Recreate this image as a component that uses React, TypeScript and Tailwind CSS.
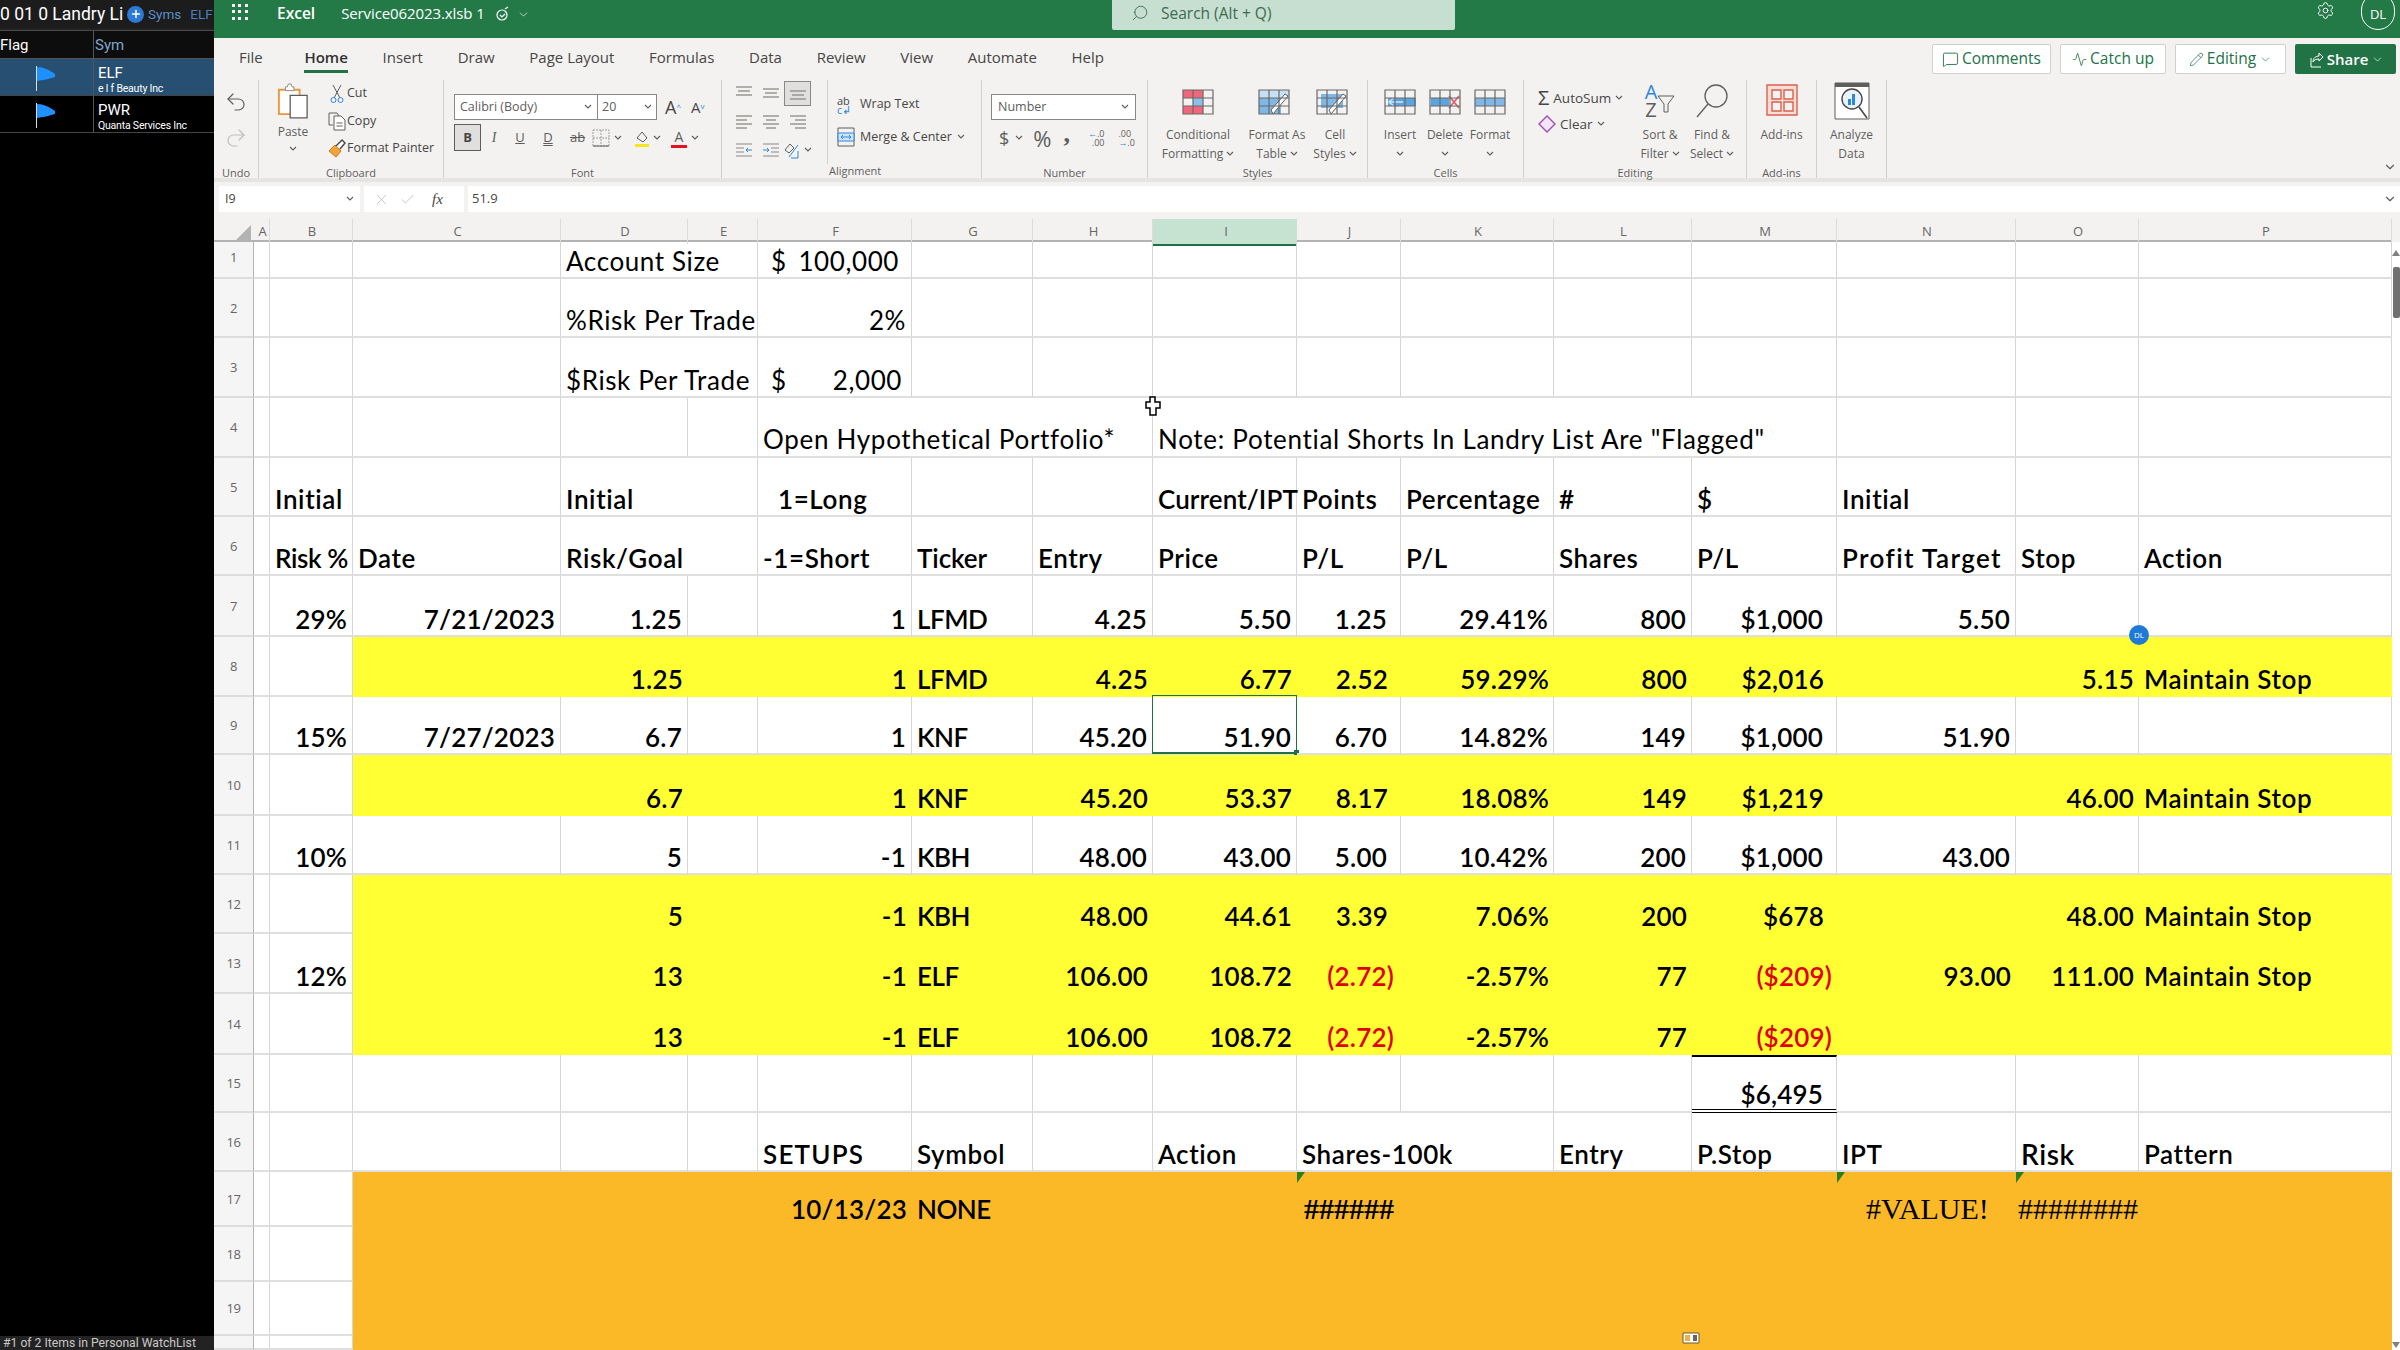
import React from "react";
import { Undo2, Redo2, X, Check, Settings, MessageSquare, Activity, Pencil, ChevronDown, Search, Plus } from "lucide-react";

type Cell = { t?: React.ReactNode; r?: boolean; c?: string; tr?: string };
type Row = { n: number; h: string; fill?: string; hide?: string; nc?: string; cells?: Record<string, Cell>; thin?: boolean };

const COLS = "grid grid-cols-[40px_16px_83px_208px_127px_70px_154px_121px_120px_144px_104px_153px_138px_145px_179px_123px_253px]";
const LETTERS = ["A", "B", "C", "D", "E", "F", "G", "H", "I", "J", "K", "L", "M", "N", "O", "P"];
const YEL = "bg-[#ffff33]";
const ORG = "bg-[#fbb927]";
const R = (t: React.ReactNode, c = ""): Cell => ({ t, r: true, c });
const L = (t: React.ReactNode, c = "", tr?: string): Cell => ({ t, c, tr });
const T = (t: React.ReactNode): Cell => ({ t, tr: "tracking-[-0.5px]" });
const PAD = "pr-[13px]";
const RED = "text-[#e00000] pr-[7px]";
const REDM = "text-[#e00000] pr-[5px]";
const SERIF = "font-['Liberation_Serif',serif] text-[30px] tracking-normal";

const rows: Row[] = [
  { n: 1, h: "h-[37px]", hide: "D", thin: true, cells: { D: L("Account Size"), F: L(<span className="flex w-full justify-between pl-[8px] pr-[12px]"><span>$</span><span>100,000</span></span>) } },
  { n: 2, h: "h-[59px]", hide: "D", thin: true, cells: { D: L("%Risk Per Trade"), F: R("2%") } },
  { n: 3, h: "h-[60px]", hide: "D", thin: true, cells: { D: L("$Risk Per Trade"), F: L(<span className="flex w-full justify-between pl-[8px] pr-[9px]"><span>$</span><span>2,000</span></span>) } },
  { n: 4, h: "h-[60px]", hide: "FGIJKL", thin: true, cells: { F: L("Open Hypothetical Portfolio*", "pb-[2px] pl-[5px]", "tracking-[0.7px]"), I: L('Note: Potential Shorts In Landry List Are "Flagged"', "pb-[2px] pl-[5px]", "tracking-[0.7px]") } },
  { n: 5, h: "h-[59px]", hide: "D", cells: { B: L("Initial"), D: L("Initial"), F: L("1=Long", "pl-[20px]"), I: L("Current/IPT", "", "tracking-[0.1px]"), J: L("Points"), K: L("Percentage"), L: L("#"), M: L("$"), N: L("Initial") } },
  { n: 6, h: "h-[59px]", hide: "D", cells: { B: L("Risk %", "", "tracking-[-0.4px]"), C: L("Date"), D: L("Risk/Goal"), F: L("-1=Short"), G: L("Ticker", "", "tracking-[-0.1px]"), H: L("Entry"), I: L("Price"), J: L("P/L"), K: L("P/L"), L: L("Shares"), M: L("P/L"), N: L("Profit Target", "", "tracking-[1.4px]"), O: L("Stop"), P: L("Action") } },
  { n: 7, h: "h-[61px]", cells: { B: R("29%"), C: R("7/21/2023"), D: R("1.25"), F: R("1"), G: T("LFMD"), H: R("4.25"), I: R("5.50"), J: R("1.25", PAD), K: R("29.41%"), L: R("800"), M: R("$1,000", PAD), N: R("5.50") } },
  { n: 8, h: "h-[60px]", fill: YEL, cells: { D: R("1.25"), F: R("1"), G: T("LFMD"), H: R("4.25"), I: R("6.77"), J: R("2.52", PAD), K: R("59.29%"), L: R("800"), M: R("$2,016", PAD), O: R("5.15"), P: L("Maintain Stop") } },
  { n: 9, h: "h-[58px]", nc: "bg-[#c6e3d1] border-r-[#1e7145]", cells: { B: R("15%"), C: R("7/27/2023"), D: R("6.7"), F: R("1"), G: T("KNF"), H: R("45.20"), I: R("51.90"), J: R("6.70", PAD), K: R("14.82%"), L: R("149"), M: R("$1,000", PAD), N: R("51.90") } },
  { n: 10, h: "h-[61px]", fill: YEL, cells: { D: R("6.7"), F: R("1"), G: T("KNF"), H: R("45.20"), I: R("53.37"), J: R("8.17", PAD), K: R("18.08%"), L: R("149"), M: R("$1,219", PAD), O: R("46.00"), P: L("Maintain Stop") } },
  { n: 11, h: "h-[59px]", cells: { B: R("10%"), D: R("5"), F: R("-1"), G: T("KBH"), H: R("48.00"), I: R("43.00"), J: R("5.00", PAD), K: R("10.42%"), L: R("200"), M: R("$1,000", PAD), N: R("43.00") } },
  { n: 12, h: "h-[59px]", fill: YEL, cells: { D: R("5"), F: R("-1"), G: T("KBH"), H: R("48.00"), I: R("44.61"), J: R("3.39", PAD), K: R("7.06%"), L: R("200"), M: R("$678", PAD), O: R("48.00"), P: L("Maintain Stop") } },
  { n: 13, h: "h-[60px]", fill: YEL, cells: { B: R("12%"), D: R("13"), F: R("-1"), G: T("ELF"), H: R("106.00"), I: R("108.72"), J: R("(2.72)", RED), K: R("-2.57%"), L: R("77"), M: R("($209)", REDM), N: R("93.00"), O: R("111.00"), P: L("Maintain Stop") } },
  { n: 14, h: "h-[61px]", fill: YEL, cells: { D: R("13"), F: R("-1"), G: T("ELF"), H: R("106.00"), I: R("108.72"), J: R("(2.72)", RED), K: R("-2.57%"), L: R("77"), M: R("($209)", REDM) } },
  { n: 15, h: "h-[58px]", cells: { M: R("$6,495", `${PAD} border-t-2 border-t-black border-b-4 border-b-black border-double`) } },
  { n: 16, h: "h-[59px]", hide: "J", cells: { F: L("SETUPS", "", "tracking-[1.2px]"), G: L("Symbol"), I: L("Action"), J: L("Shares-100k"), L: L("Entry"), M: L("P.Stop"), N: L("IPT"), O: L(<span className="text-[28px]">Risk</span>), P: L("Pattern") } },
  { n: 17, h: "h-[55px]", fill: ORG, cells: { F: R("10/13/23"), G: T("NONE"), J: L(<span className={`${SERIF} font-bold`}>######</span>, "pl-[7px]"), N: L(<span className={`w-full pl-[24px] font-normal ${SERIF}`}>#VALUE!</span>), O: L(<span className={`font-normal ${SERIF}`}>########</span>, "pl-[2px]") } },
  { n: 18, h: "h-[55px]", fill: ORG },
  { n: 19, h: "h-[54px]", fill: ORG },
  { n: 20, h: "h-[14px]", fill: ORG, nc: "text-transparent" },
];

function Chev({ c = "" }: { c?: string }) {
  return (
    <svg width="8" height="6" viewBox="0 0 8 6" className={`shrink-0 ${c}`} fill="none" stroke="#605e5c" strokeWidth="1.1">
      <path d="M1 1l3 3 3-3" />
    </svg>
  );
}

function TableGlyph({ children, w = 32, h = 28 }: { children?: React.ReactNode; w?: number; h?: number }) {
  return (
    <svg width={w} height={h} viewBox="0 0 32 28" fill="none">
      {children}
      <path d="M1 2h30v24H1zM1 10h30M1 18h30M11 2v24M21 2v24" stroke="#6b6967" strokeWidth="1.2" />
    </svg>
  );
}

function Lines({ ys, xs }: { ys: number[]; xs: [number, number][] }) {
  return (
    <svg width="18" height="18" viewBox="0 0 18 18" stroke="#8a8886" strokeWidth="1.3">
      {ys.map((y, i) => (
        <path key={i} d={`M${xs[i][0]} ${y}H${xs[i][1]}`} />
      ))}
    </svg>
  );
}

function Group({ w, label, children, c = "" }: { w: string; label?: string; children: React.ReactNode; c?: string }) {
  return (
    <div className={`${w} h-[98px] shrink-0 flex flex-col border-r border-[#d2d0ce] ${c}`}>
      <div className="flex-1 flex min-h-0">{children}</div>
      {label && <div className="h-[14px] mb-[-2px] text-center text-[11px] leading-[14px] text-[#605e5c]">{label}</div>}
    </div>
  );
}

function BigBtn({ w, icon, l1, l2, chev }: { w: string; icon: React.ReactNode; l1: string; l2?: string; chev?: boolean }) {
  return (
    <div className={`${w} flex flex-col items-center text-[12px] leading-[19px] text-[#605e5c]`}>
      <div className="h-[45px] pt-[8px] flex items-start justify-center">{icon}</div>
      <div className="whitespace-nowrap">{l1}</div>
      <div className="flex items-center gap-[3px] whitespace-nowrap h-[19px]">
        {l2}
        {chev && <Chev />}
      </div>
    </div>
  );
}

function Ribbon() {
  return (
    <div className="h-[102px] flex bg-[#f3f2f1] border-b-[4px] border-[#e6e4e2] font-['Open_Sans',sans-serif] text-[12.5px] text-[#484644]">
      <Group w="w-[45px]" label="Undo">
        <div className="w-full flex flex-col items-center pt-[10px] gap-[12px]">
          <Undo2 size={24} strokeWidth={1.2} color="#605e5c" />
          <Redo2 size={24} strokeWidth={1.2} color="#c0bebc" />
        </div>
      </Group>
      <Group w="w-[185px]" label="Clipboard">
        <div className="w-[68px] flex flex-col items-center pt-[2px]">
          <svg width="32" height="38" viewBox="0 0 34 38" fill="none">
            <path d="M2 7h22v26H2z" fill="#fff" stroke="#e8973a" strokeWidth="2" />
            <path d="M9 7V4h2l1-3h3l1 3h2v4H9z" fill="#fff" stroke="#8a8886" />
            <path d="M14 13h18v24H14z" fill="#fff" stroke="#605e5c" strokeWidth="1.4" />
          </svg>
          <div className="mt-[2px] text-[12px] leading-[20px] text-[#605e5c]">Paste</div>
          <Chev c="mt-[4px]" />
        </div>
        <div className="flex flex-col">
          {[
            [<svg key="a" width="14" height="20" viewBox="0 0 14 20" fill="none"><path d="M3 1l7 13M11 1L4 14" stroke="#605e5c" /><circle cx="3.500" cy="16" r="2.500" stroke="#2b88d8" /><circle cx="10.500" cy="16" r="2.500" stroke="#2b88d8" /></svg>, "Cut"],
            [<svg key="b" width="18" height="20" viewBox="0 0 18 20" fill="none"><path d="M5 14H1V2h8l2 3" stroke="#605e5c" /><path d="M6 5h7l4 4v10H6z" fill="#fff" stroke="#605e5c" /><path d="M8.500 12h6M8.500 15h6" stroke="#605e5c" /></svg>, "Copy"],
            [<svg key="c" width="18" height="20" viewBox="0 0 18 20" fill="none"><path d="M1 12l6-6 6 6-5 6z" fill="#f2a43a" stroke="#c9781d" /><path d="M8 7l6-6 3 3-5 6" fill="#fff" stroke="#484644" strokeWidth="1.4" /></svg>, "Format Painter"],
          ].map(([i, t], k) => (
            <div key={k} className="h-[27.500px] flex items-center">
              <div className="w-[20px] flex justify-center">{i}</div>
              <span className="text-[12.500px] whitespace-nowrap">{t}</span>
            </div>
          ))}
        </div>
      </Group>
      <Group w="w-[278px]" label="Font">
        <div className="pl-[10px] pt-[14px] flex flex-col">
          <div className="flex items-center h-[26px]">
            <div className="w-[144px] h-full bg-white border border-[#8a8886] flex items-center justify-between px-[5px] text-[12.500px] text-[#605e5c]">
              Calibri (Body)
              <Chev />
            </div>
            <div className="w-[59px] h-full bg-white border border-l-0 border-[#8a8886] flex items-center justify-between px-[4px] text-[12.500px] text-[#605e5c]">
              20
              <Chev />
            </div>
            <span className="ml-[8px] text-[18px] leading-none">A<sup className="text-[#2b88d8] text-[8px]">^</sup></span>
            <span className="ml-[10px] text-[15px] leading-none">A<sup className="text-[#2b88d8] text-[8px]">v</sup></span>
          </div>
          <div className="mt-[4px] flex items-center h-[27px] text-[14px]">
            <div className="w-[27px] h-[27px] bg-[#e1dfdd] border border-[#605e5c] flex items-center justify-center font-bold text-[13px]">B</div>
            <span className="w-[26px] text-center italic font-['Liberation_Serif',serif] text-[#605e5c]">I</span>
            <span className="w-[26px] text-center underline text-[#605e5c] text-[13px]">U</span>
            <span className="w-[30px] text-center underline decoration-double text-[#605e5c] text-[13px]">D</span>
            <span className="w-[29px] text-center line-through text-[#605e5c] text-[13px]">ab</span>
            <svg width="18" height="18" viewBox="0 0 18 18" fill="none" stroke="#a19f9d"><path d="M1 1h16v16H1zM9 1v16M1 9h16" strokeDasharray="2 1" /><path d="M1 17h16" stroke="#605e5c" /></svg>
            <Chev c="ml-[4px]" />
            <svg className="ml-[12px]" width="16" height="20" viewBox="0 0 16 20" fill="none"><path d="M3 10l5-6 5 6-4 4z" stroke="#605e5c" /><path d="M1 16h14v3H1z" fill="#f5e71f" /></svg>
            <Chev c="ml-[3px]" />
            <span className="ml-[10px] w-[16px] text-center text-[14px] leading-[17px] border-b-[3px] border-[#e81123] text-[#605e5c]">A</span>
            <Chev c="ml-[4px]" />
          </div>
        </div>
      </Group>
      <Group w="w-[260px]">
        <div className="w-[106px] h-[84px] border-r border-[#d2d0ce] pl-[8px] grid grid-cols-[27px_27px_27px] grid-rows-[26px_30px_27px] items-center justify-items-center self-start">
          <Lines ys={[3, 7, 11]} xs={[[1, 17], [3, 15], [1, 17]]} />
          <Lines ys={[5, 9, 13]} xs={[[1, 17], [3, 15], [1, 17]]} />
          <div className="w-[27px] h-[25px] bg-[#e1dfdd] border border-[#8a8886] flex items-center justify-center"><Lines ys={[7, 11, 15]} xs={[[1, 17], [3, 15], [1, 17]]} /></div>
          <Lines ys={[4, 8, 12, 16]} xs={[[1, 17], [1, 12], [1, 17], [1, 12]]} />
          <Lines ys={[4, 8, 12, 16]} xs={[[1, 17], [4, 14], [1, 17], [4, 14]]} />
          <Lines ys={[4, 8, 12, 16]} xs={[[1, 17], [6, 17], [1, 17], [6, 17]]} />
          <svg width="18" height="16" viewBox="0 0 18 16" fill="none"><path d="M1 2h16M1 14h16M1 6h8M1 10h8" stroke="#8a8886" /><path d="M17 8h-6m2-2l-2 2 2 2" stroke="#2b88d8" /></svg>
          <svg width="18" height="16" viewBox="0 0 18 16" fill="none"><path d="M1 2h16M1 14h16M9 6h8M9 10h8" stroke="#8a8886" /><path d="M1 8h6m-2-2l2 2-2 2" stroke="#2b88d8" /></svg>
          <div className="flex items-center gap-[3px]"><svg width="18" height="18" viewBox="0 0 18 18" fill="none"><path d="M2 9l5-6 4 4-5 5z" stroke="#605e5c" /><path d="M6 16L15 4m0 6v7H8" stroke="#2b88d8" /></svg><Chev /></div>
        </div>
        <div className="pl-[9px] pt-[13px] flex flex-col flex-1 whitespace-nowrap">
          <div className="flex items-center h-[24px] gap-[5px]">
            <span className="w-[18px] text-[11px] leading-[9px] text-[#484644]">ab<br /><span className="text-[#2b88d8]">c↲</span></span>
            <span>Wrap Text</span>
          </div>
          <div className="mt-[9px] flex items-center h-[24px] gap-[5px]">
            <svg width="18" height="20" viewBox="0 0 18 20" fill="none"><path d="M1 1h16v18H1z" stroke="#605e5c" /><path d="M1 6h16v8H1z" fill="#cfe4f5" stroke="#2b88d8" /><path d="M4 10h10m-8-2l-2 2 2 2m6-4l2 2-2 2" stroke="#2b88d8" /></svg>
            <span>Merge &amp; Center</span>
            <Chev />
          </div>
          <div className="mt-[15px] h-[14px] text-[11px] leading-[14px] text-[#605e5c] -ml-[8px]">Alignment</div>
        </div>
      </Group>
      <Group w="w-[166px]" label="Number">
        <div className="pl-[9px] pt-[14px] flex flex-col">
          <div className="w-[145px] h-[26px] bg-white border border-[#8a8886] flex items-center justify-between px-[6px] text-[12.500px] text-[#605e5c]">
            Number
            <Chev />
          </div>
          <div className="mt-[5px] flex items-center text-[#605e5c] h-[26px]">
            <span className="ml-[8px] text-[18px]">$</span>
            <Chev c="ml-[6px]" />
            <span className="ml-[10px] text-[22px] leading-none">%</span>
            <span className="ml-[12px] text-[26px] font-bold leading-none -mt-[8px] font-['Liberation_Serif',serif]">,</span>
            <span className="ml-[18px] text-[9px] leading-[9px] text-right"><span className="text-[#2b88d8]">←</span>.0<br />.00</span>
            <span className="ml-[14px] text-[9px] leading-[9px]">.00<br /><span className="text-[#2b88d8]">→</span>.0</span>
          </div>
        </div>
      </Group>
      <Group w="w-[220px]" label="Styles">
        <BigBtn w="w-[96px] ml-[2px]" l1="Conditional" l2="Formatting" chev icon={
          <TableGlyph><path d="M1 2h20v8H1zM1 18h20v8H1z" fill="#f2667c" /><path d="M11 10h10v8H11z" fill="#8ac1ea" /></TableGlyph>} />
        <BigBtn w="w-[62px]" l1="Format As" l2="Table" chev icon={
          <span className="-ml-[6px] flex"><TableGlyph><path d="M1 2h30v8H1z" fill="#c7e0f4" /><path d="M1 10h22v16H1z" fill="#7fb8e6" /><path d="M15 26L30 8l-3-2L13 22z" fill="#fff" stroke="#605e5c" /></TableGlyph></span>} />
        <BigBtn w="w-[54px]" l1="Cell" l2="Styles" chev icon={
          <span className="-ml-[6px] flex"><TableGlyph><path d="M5 6h22v14H5z" fill="#7fb8e6" /><path d="M15 26L30 8l-3-2L13 22z" fill="#fff" stroke="#605e5c" /></TableGlyph></span>} />
      </Group>
      <Group w="w-[156px]" label="Cells">
        <BigBtn w="w-[46px] ml-[9px]" l1="Insert" chev icon={
          <TableGlyph><path d="M4 10h28v8H4z" fill="#5aa5e0" /><path d="M12 8l-7 6 7 6M5 14h14" stroke="#cfe4f5" strokeWidth="1.5" /></TableGlyph>} />
        <BigBtn w="w-[44px]" l1="Delete" chev icon={
          <TableGlyph><path d="M2 10h18v8H2z" fill="#5aa5e0" /><path d="M20 8l10 12M30 8L20 20" stroke="#e3596c" strokeWidth="1.6" /></TableGlyph>} />
        <BigBtn w="w-[46px]" l1="Format" chev icon={
          <TableGlyph><path d="M1 10h30v8H1z" fill="#7fb8e6" /></TableGlyph>} />
      </Group>
      <Group w="w-[223px]" label="Editing">
        <div className="w-[109px] pl-[14px] pt-[3px] flex flex-col text-[13.500px] whitespace-nowrap">
          <div className="flex items-center h-[30px] gap-[4px]"><span className="text-[20px] leading-none text-[#484644]">Σ</span>AutoSum<Chev /></div>
          <div className="flex items-center h-[22px] gap-[4px]">
            <svg width="18" height="18" viewBox="0 0 18 18" fill="none"><path d="M9 1l8 8-8 8-8-8z" fill="#f4e4f8" stroke="#9b4fb5" strokeWidth="1.4" /></svg>
            Clear<Chev />
          </div>
        </div>
        <BigBtn w="w-[54px]" l1="Sort &" l2="Filter" chev icon={
          <span className="flex items-start h-[36px] mt-[-5px]">
            <span className="text-[20px] leading-[18px] text-center"><span className="text-[#2b88d8]">A</span><br />Z</span>
            <svg className="mt-[12px]" width="18" height="20" viewBox="0 0 18 20" fill="none" stroke="#605e5c"><path d="M1 1h16l-6 8v8H7V9z" /></svg>
          </span>} />
        <BigBtn w="w-[50px]" l1="Find &" l2="Select" chev icon={
          <svg width="36" height="36" viewBox="0 0 36 36" fill="none" stroke="#605e5c" strokeWidth="1.3" className="-mt-[5px]"><circle cx="22" cy="13" r="11" /><path d="M14 21L3 34" /></svg>} />
      </Group>
      <Group w="w-[70px]" label="Add-ins">
        <BigBtn w="w-full" l1="Add-ins" icon={
          <svg width="32" height="32" viewBox="0 0 32 32" fill="none" stroke="#d9624f" strokeWidth="1.4" className="-mt-[4px]"><path d="M1 1h30v30H1z" fill="#f8ddd6" /><path d="M6 6h9v9H6zM18 6h9v9h-9zM6 18h9v9H6zM18 18h9v9h-9z" fill="#f3f2f1" /></svg>} />
      </Group>
      <Group w="w-[70px]">
        <BigBtn w="w-full" l1="Analyze" l2="Data" icon={
          <svg width="36" height="38" viewBox="0 0 36 38" fill="none" className="-mt-[6px]"><path d="M1 1h34v36H1z" fill="#fff" stroke="#605e5c" /><path d="M1 1h34v4H1z" fill="#605e5c" /><circle cx="18" cy="17" r="10" fill="#eaf3fb" stroke="#484644" strokeWidth="1.4" /><path d="M14 23v-6h3v6zM18 23V12h3v11z" fill="#2b88d8" /><path d="M25 25l8 11" stroke="#484644" strokeWidth="1.6" /></svg>} />
      </Group>
      <div className="flex-1 flex items-end justify-end pr-[3px] pb-[4px]"><ChevronDown size={14} color="#605e5c" /></div>
    </div>
  );
}

function Tabs() {
  const names: [string, string][] = [
    ["File", "mr-[7px]"], ["Home", ""], ["Insert", ""], ["Draw", ""], ["Page Layout", ""], ["Formulas", ""], ["Data", ""], ["Review", ""], ["View", ""], ["Automate", ""], ["Help", ""],
  ];
  const btn = "h-[30px] flex items-center justify-center gap-[3px] rounded-[2px] border border-[#d2d0ce] bg-white text-[#217346] text-[15.500px]";
  return (
    <div className="h-[42px] flex items-center bg-[#f3f2f1] font-['Open_Sans',sans-serif] text-[15px] text-[#484644] pl-[25px] pr-[4px]">
      <div className="flex gap-[34.700px] -mt-[4px]">
        {names.map(([t, c]) => (
          <div key={t} className={`relative leading-[20px] ${c} ${t === "Home" ? "font-semibold text-[#323130]" : ""}`}>
            {t}
            {t === "Home" && <div className="absolute left-0 right-0 top-[23px] h-[3px] bg-[#217346]" />}
          </div>
        ))}
      </div>
      <div className="ml-auto flex gap-[9px]">
        <div className={`${btn} w-[119px]`}><MessageSquare size={17} strokeWidth={1.3} />Comments</div>
        <div className={`${btn} w-[106px]`}><Activity size={15} strokeWidth={1.3} />Catch up</div>
        <div className={`${btn} w-[111px]`}><Pencil size={15} strokeWidth={1.2} />Editing<ChevronDown size={13} strokeWidth={1.2} /></div>
        <div className="h-[30px] w-[101px] flex items-center justify-center gap-[3px] rounded-[2px] bg-[#217346] text-white text-[15px] font-semibold">
          <svg width="17" height="17" viewBox="0 0 17 17" fill="none" stroke="#fff"><path d="M4 7v9h10M6 11c0-4 3-6 6-6V2l4 4-4 4V8c-3 0-5 1-6 3z" /></svg>
          Share<ChevronDown size={13} strokeWidth={1.2} />
        </div>
      </div>
    </div>
  );
}

function TitleBar() {
  return (
    <div className="h-[38px] flex bg-[#247a47] text-white font-['Open_Sans',sans-serif]">
      <div className="w-[898px] flex shrink-0">
        <div className="grid grid-cols-3 gap-[3px] w-[16px] h-[16px] mt-[4px] ml-[18px]">
          {Array.from({ length: 9 }).map((_, i) => <span key={i} className="w-[3px] h-[3px] bg-white" />)}
        </div>
        <div className="ml-[29px] pt-[2px] text-[15.500px] leading-[22px] font-semibold">Excel</div>
        <div className="ml-[26px] pt-[2px] text-[15px] leading-[22px] tracking-[-0.1px]">Service062023.xlsb 1</div>
        <svg className="ml-[10px] mt-[6px]" width="16" height="16" viewBox="0 0 16 16" fill="none" stroke="#fff" strokeWidth="1.2"><circle cx="7" cy="9" r="5" /><path d="M5 9l2 2 3-3M10 3l3-2" /></svg>
        <ChevronDown className="ml-[6px] mt-[8px]" size={13} strokeWidth={1.2} />
      </div>
      <div className="w-[343px] h-[30px] rounded-b-[2px] bg-[#c6dfd0] flex items-center pl-[19px] text-[#3f6a50] text-[15.500px]">
        <Search size={18} strokeWidth={1.2} className="-scale-x-100 -mt-[4px]" />
        <span className="ml-[12px] -mt-[2px]">Search (Alt + Q)</span>
      </div>
      <div className="ml-auto flex items-start">
        <Settings className="mt-[1px]" size={19} strokeWidth={1.2} />
        <div className="ml-[26px] mr-[5px] -mt-[7px] w-[34px] h-[37px] rounded-full border border-white flex items-center justify-center text-[13px] pt-[7px]">DL</div>
      </div>
    </div>
  );
}

function FormulaBar() {
  return (
    <div className="h-[30px] flex items-end bg-[#f3f2f1] font-['Open_Sans',sans-serif] pl-[5px] gap-[4px]">
      <div className="w-[141px] h-[26px] bg-white flex items-center justify-between px-[6px] text-[12.500px] text-[#484644]">I9<Chev /></div>
      <div className="w-[100px] h-[26px] bg-white flex items-center gap-[9px] pl-[9px]">
        <X size={17} strokeWidth={1} color="#b5b3b1" />
        <Check size={17} strokeWidth={1} color="#b5b3b1" />
        <span className="ml-[7px] italic font-['Liberation_Serif',serif] text-[15px] text-[#484644]">fx</span>
      </div>
      <div className="flex-1 h-[26px] bg-white flex items-center justify-between pl-[4px] pr-[3px] text-[13px] text-[#484644]">51.9<ChevronDown size={14} color="#605e5c" /></div>
    </div>
  );
}

function SheetRow({ row }: { row: Row }) {
  return (
    <div className={`${COLS} ${row.h} font-['Lato',sans-serif] text-[26px] leading-[30px] text-black ${row.thin ? "font-normal" : "font-semibold"}`}>
      <div className={`flex ${row.n === 1 ? "items-start" : "items-center"} justify-center border-r border-b-2 border-r-[#b3b3b3] border-b-[#dcdcdc] font-['Open_Sans',sans-serif] font-normal tracking-[-0.4px] text-[13px] text-[#666] bg-[#f5f5f5] ${row.nc ?? ""}`}>
        {row.n === 20 ? "" : row.n}
      </div>
      {LETTERS.map((col, idx) => {
        const cell = row.cells?.[col];
        const filled = row.fill && idx >= 2;
        const hidden = row.hide?.includes(col);
        const border = filled ? "" : `border-b-2 border-b-[#dfdfdf] ${hidden ? "" : "border-r border-r-[#d6d6d6]"}`;
        const c = cell?.c ?? "";
        const pad = cell?.r ? (c.includes("pr-") ? "justify-end" : "justify-end pr-[5px]") : c.includes("pl-") ? "" : "pl-[5px]";
        const track = cell?.tr ?? (row.thin || !cell?.r ? "tracking-[0.6px]" : "tracking-[0.2px]");
        const pb = c.includes("pb-") ? "" : row.n === 15 && col === "M" ? "pb-0" : filled ? "pb-[3px]" : "pb-[1px]";
        return (
          <div key={col} className={`relative flex items-end whitespace-nowrap ${pb} ${pad} ${track} ${filled ? row.fill : ""} ${border} ${c}`}>
            {cell?.t}
            {row.n === 9 && col === "I" && (
              <div className="absolute -left-px -top-[2px] -right-px -bottom-[1px] border border-b-2 border-[#1e7145]">
                <div className="absolute -right-[3px] -bottom-[3px] w-[5px] h-[5px] bg-[#1e7145]" />
              </div>
            )}
            {row.n === 17 && (col === "J" || col === "N" || col === "O") && (
              <svg className="absolute left-0 top-0" width="8" height="11" viewBox="0 0 8 11"><path d="M0 0h8L0 11z" fill="#2e7d1f" /></svg>
            )}
          </div>
        );
      })}
    </div>
  );
}

function Sheet() {
  return (
    <div className="flex-1 min-h-0 flex bg-[#f3f2f1] relative overflow-hidden">
      <div className="w-[2178px] pt-[7px]">
        <div className={`${COLS} h-[23px] border-b-2 border-[#b3b3b3] font-['Open_Sans',sans-serif] text-[13px] leading-[25px] text-[#666] text-center`}>
          <div className="flex items-end justify-end pr-[3px] pb-[2px]"><svg width="17" height="17" viewBox="0 0 17 17"><path d="M17 0v17H0z" fill="#b3b3b3" /></svg></div>
          {LETTERS.map((c) => (
            <div key={c} className={`pl-[2px] ${c === "I" ? "bg-[#c6e3d1] border-b-2 -mb-[2px] border-[#1e7145]" : "border-r border-[#dcdcdc]"}`}>{c}</div>
          ))}
        </div>
        <div className="bg-white">
          {rows.map((r) => <SheetRow key={r.n} row={r} />)}
        </div>
      </div>
      <div className="w-[8px] bg-white mt-[30px] flex flex-col items-center pt-[8px]">
        <div className="w-0 h-0 border-x-[4px] border-x-transparent border-b-[6px] border-b-[#808080]" />
        <div className="w-[7px] h-[51px] mt-[11px] ml-[1px] rounded-[2px] bg-[#707070]" />
        <div className="mt-auto mb-[2px] w-0 h-0 border-x-[4px] border-x-transparent border-t-[6px] border-t-[#808080]" />
      </div>
      {/* cursor over the sheet */}
      <svg className="absolute left-[931px] top-[184px]" width="16" height="20" viewBox="0 0 16 20" fill="#fff" stroke="#000" strokeWidth="1.5"><path d="M5 1h5v5h5v6h-4v7H5v-7H1V6h4z" /></svg>
      {/* presence pin */}
      <div className="absolute left-[1915px] top-[413px] w-[20px] h-[20px] rounded-full bg-[#1f7ad6] text-white flex items-center justify-center text-[8px] font-['Open_Sans',sans-serif]">DL</div>
      {/* paste options */}
      <svg className="absolute left-[1468px] top-[1120px]" width="18" height="12" viewBox="0 0 18 12" fill="none"><path d="M1 1h16v10H1z" fill="#fff" stroke="#6b5a2e" /><path d="M3 3h5v6H3z" fill="#e8b34a" /><path d="M11 3h4v6h-4z" fill="#666" /></svg>
    </div>
  );
}

function Sidebar() {
  return (
    <div className="w-[214px] shrink-0 h-full bg-black flex flex-col font-['Roboto',sans-serif] text-white overflow-hidden">
      <div className="h-[28px] flex items-center bg-[#1c1c1c] whitespace-nowrap">
        <span className="text-[17.500px] w-[127px] overflow-hidden">0 01 0 Landry Li</span>
        <span className="w-[17px] h-[17px] rounded-full bg-[#2d7ad6] flex items-center justify-center"><Plus size={12} strokeWidth={3} color="#fff" /></span>
        <span className="ml-[4px] text-[13.500px] text-[#5b8fc7]">Syms</span>
        <span className="ml-[9px] text-[13.500px] text-[#4a7fc0]">ELF</span>
      </div>
      <div className="h-[3px] bg-[#222] border-b border-[#4a4a4a]" />
      <div className="h-[28px] flex text-[15px] bg-[#0d0d0d] border-b border-[#555] leading-[28px]">
        <div className="w-[94px] border-r border-[#555]">Flag</div>
        <div className="pl-[1px] text-[#7fa6cf]">Sym</div>
      </div>
      {[
        { s: "ELF", n: "e l f Beauty Inc", bg: "bg-[#264f72]" },
        { s: "PWR", n: "Quanta Services Inc", bg: "bg-black" },
      ].map((r) => (
        <div key={r.s} className={`h-[37px] flex border-b border-[#444] ${r.bg}`}>
          <div className="w-[94px] border-r border-[#555] pl-[36px] pt-[7px]">
            <svg width="20" height="25" viewBox="0 0 20 25"><path d="M.5 0v25" stroke="#ddd" /><path d="M1 1c7 0 12 3 18 7v3C13 13 7 14 1 15z" fill="#1e90ff" /></svg>
          </div>
          <div className="pl-[4px] pt-[5px]">
            <div className="text-[15px] leading-[18px]">{r.s}</div>
            <div className="text-[10.500px] leading-[13px] tracking-[-0.2px] whitespace-nowrap">{r.n}</div>
          </div>
        </div>
      ))}
      <div className="flex-1" />
      <div className="h-[14px] bg-[#222] text-[#c8c8c8] text-[12.200px] leading-[14px] pl-[3px] whitespace-nowrap">#1 of 2 Items in Personal WatchList</div>
    </div>
  );
}

export default function App() {
  return (
    <div className="w-[2400px] h-[1350px] flex overflow-hidden bg-white">
      <Sidebar />
      <div className="flex-1 min-w-0 flex flex-col h-full">
        <TitleBar />
        <Tabs />
        <Ribbon />
        <FormulaBar />
        <Sheet />
      </div>
    </div>
  );
}
